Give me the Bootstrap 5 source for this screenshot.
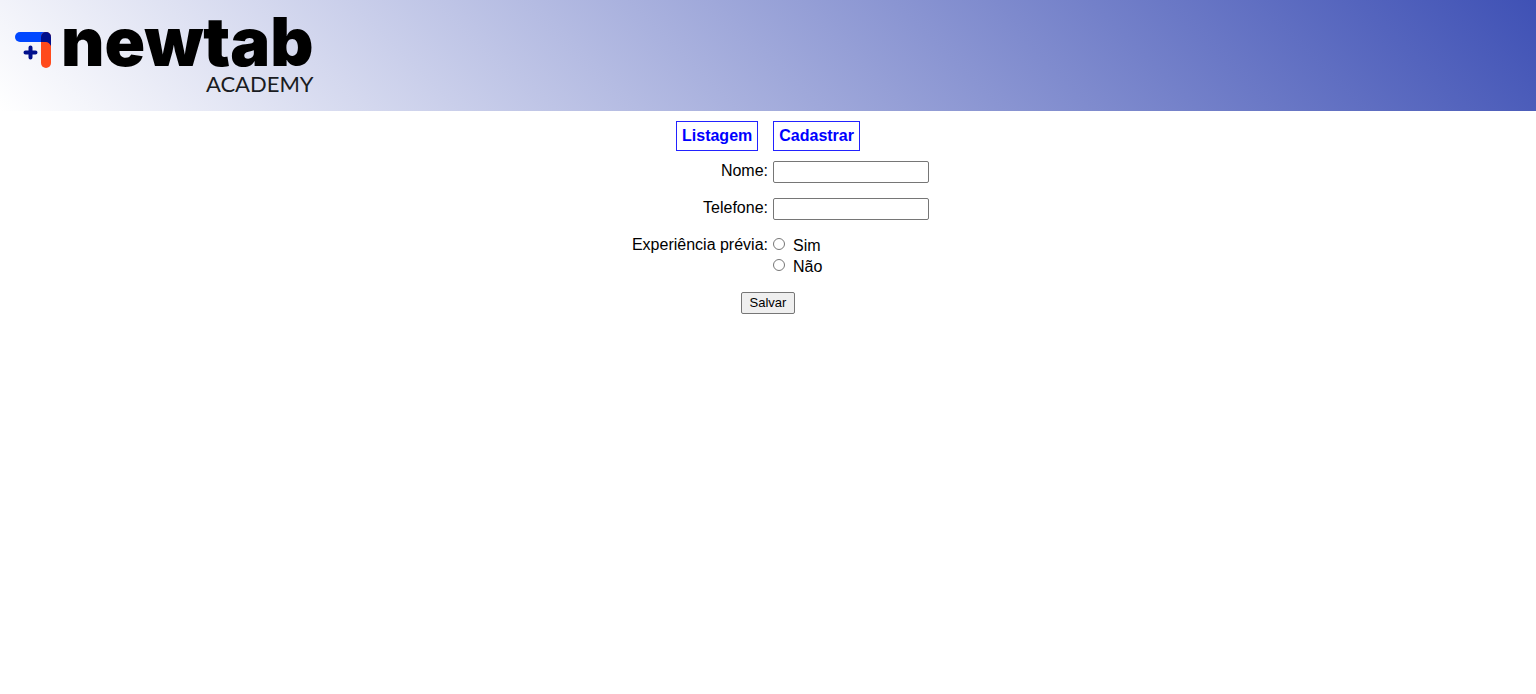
<!DOCTYPE html>
<html lang="pt-BR">
<head>
<meta charset="utf-8">
<meta name="viewport" content="width=device-width, initial-scale=1">
<title>Newtab Academy</title>
<link rel="stylesheet" href="https://cdn.jsdelivr.net/npm/bootstrap@5.3.0/dist/css/bootstrap.min.css">
<style>
body { font-family: "Liberation Sans", Arial, sans-serif; font-size: 16px; line-height: 20px; color: #000; background: #fff; }
.site-header { background: linear-gradient(45deg, #fff, #3f51b5); padding: 10px 15px 17px; }
.brand { color: #000; }
.brand-mark { width: 36px; height: 36px; margin-top: 22px; margin-right: 10px; }
.brand-name { font: 900 67px/64px Inter, sans-serif; }
.brand-sub { font: 400 22px/20px Lato, sans-serif; color: #1a1c22; }
.site-nav { gap: 15px; padding: 10px 0; }
.tab-link { border: 1px solid #22f; color: #00f; padding: 5px; line-height: 18px; }
.entry-form { display: grid; gap: 15px; }
.entry-form .row { --bs-gutter-x: 0; }
.field-side { padding-left: 5px; }
.text-box { width: 156px; height: 22px; border: 1px solid #767676; border-radius: 2px; padding: 1px 2px; font-size: 13px; }
.option-line { line-height: 21px; gap: 8px; }
.option-line input { width: 12px; height: 12px; margin: 3px 0 0; }
.save-button { font-size: 13px; line-height: 16px; padding: 2px 8px; border: 1px solid #767676; border-radius: 2px; background: #efefef; color: #000; }
</style>
</head>
<body>
<header class="site-header">
  <a href="#" class="brand d-inline-flex align-items-start align-top text-decoration-none">
    <svg class="brand-mark flex-shrink-0" viewBox="0 0 36 36" aria-hidden="true">
      <rect width="36" height="10" rx="5" fill="#0047ff"/>
      <rect x="26" width="10" height="36" rx="5" fill="#ff4a1c"/>
      <path d="M26 10V5a5 5 0 0 1 10 0v9q-2-4-5-4z" fill="#000f8c"/>
      <path d="M15.500 15.500v10M10.500 20.500h10" stroke="#000f8c" stroke-width="4" stroke-linecap="round"/>
    </svg>
    <span class="d-flex flex-column align-items-end">
      <span class="brand-name">newtab</span>
      <span class="brand-sub">ACADEMY</span>
    </span>
  </a>
</header>
<main class="container-fluid">
  <nav class="site-nav d-flex justify-content-center">
    <a href="#" class="tab-link fw-bold text-decoration-none">Listagem</a>
    <a href="#" class="tab-link fw-bold text-decoration-none">Cadastrar</a>
  </nav>
  <form class="entry-form">
    <div class="row">
      <label class="col-6 text-end" for="nome">Nome:</label>
      <div class="col-6 field-side d-flex"><input class="text-box" type="text" id="nome"></div>
    </div>
    <div class="row">
      <label class="col-6 text-end" for="telefone">Telefone:</label>
      <div class="col-6 field-side d-flex"><input class="text-box" type="text" id="telefone"></div>
    </div>
    <div class="row" role="radiogroup" aria-labelledby="experiencia">
      <div class="col-6 text-end" id="experiencia">Experiência prévia:</div>
      <div class="col-6 field-side">
        <div class="option-line d-flex align-items-start"><input type="radio" name="experiencia" id="sim"><label for="sim">Sim</label></div>
        <div class="option-line d-flex align-items-start"><input type="radio" name="experiencia" id="nao"><label for="nao">Não</label></div>
      </div>
    </div>
    <div class="text-center"><button type="button" class="save-button">Salvar</button></div>
  </form>
</main>
<script src="https://cdn.jsdelivr.net/npm/bootstrap@5.3.0/dist/js/bootstrap.bundle.min.js"></script>
</body>
</html>
